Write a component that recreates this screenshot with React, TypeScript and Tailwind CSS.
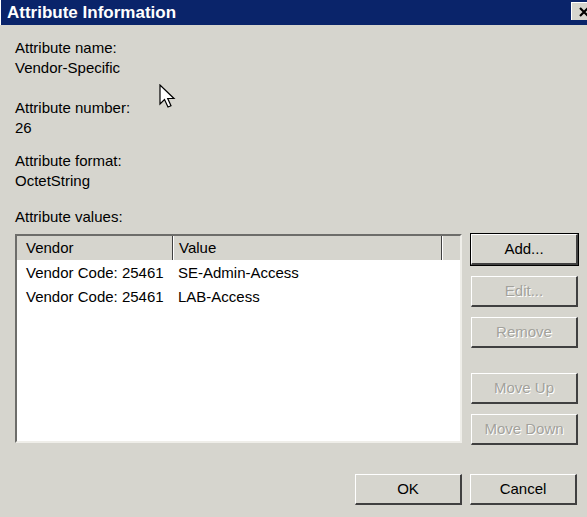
import React from "react";

const font = { fontFamily: '"Liberation Sans", Arial, sans-serif' };

function Btn({ label, disabled, def, className = "" }: { label: string; disabled?: boolean; def?: boolean; className?: string }) {
  return (
    <div
      className={
        "flex h-[31px] w-[107px] items-center justify-center text-[15px] border-t border-l border-t-white border-l-white border-b-2 border-r-2 border-b-[#404040] border-r-[#404040] bg-[#d6d5ce] " +
        (def ? "outline outline-1 outline-black " : "") +
        (disabled ? "text-[#a3a29c] [text-shadow:1px_1px_0_#ffffff] " : "text-black ") +
        className
      }
    >
      {label}
    </div>
  );
}

export default function App() {
  return (
    <div className="relative h-[517px] w-[587px] overflow-hidden bg-[#d6d5ce] text-[15px] text-black" style={font}>
      <div className="flex h-[25px] items-center justify-between border-l border-white bg-[#0a246a] pl-[6px]">
        <span className="text-[17px] font-bold text-white">Attribute Information</span>
        <div className="mr-[-8px] mt-[-3px] flex h-[18px] w-[24px] items-center justify-center border-t border-l border-white bg-[#d6d5ce]">
          <svg width="12" height="10" viewBox="0 0 12 10">
            <path d="M2 1 L10 9 M10 1 L2 9" stroke="#000" strokeWidth="2.2" />
          </svg>
        </div>
      </div>

      <div className="px-[15px] pt-[13px] leading-[20px]">
        <div>Attribute name:</div>
        <div>Vendor-Specific</div>
        <div className="mt-[20px]">Attribute number:</div>
        <div>26</div>
        <div className="mt-[13px]">Attribute format:</div>
        <div>OctetString</div>
        <div className="mt-[16px]">Attribute values:</div>
      </div>

      <div className="mt-[7px] flex gap-[9px] pl-[15px]">
        <div className="h-[209px] w-[447px] border-t-2 border-l-2 border-t-[#6d6d6a] border-l-[#6d6d6a] border-b-2 border-r-2 border-b-[#efeee9] border-r-[#efeee9] bg-white">
          <div className="flex h-[24px] items-stretch bg-[#d6d5ce]">
            <div className="flex w-[156px] items-center border-r border-r-[#404040] pl-[9px]">Vendor</div>
            <div className="flex w-[269px] items-center border-l border-white border-r border-r-[#404040] pl-[5px]">Value</div>
            <div className="flex-1 border-l border-white" />
          </div>
          <div className="leading-[24px]">
            <div className="flex pt-[1px]">
              <span className="w-[161px] pl-[9px]">Vendor Code: 25461</span>
              <span>SE-Admin-Access</span>
            </div>
            <div className="flex">
              <span className="w-[161px] pl-[9px]">Vendor Code: 25461</span>
              <span>LAB-Access</span>
            </div>
          </div>
        </div>

        <div className="flex flex-col">
          <Btn label="Add..." def />
          <Btn label="Edit..." disabled className="mt-[11px]" />
          <Btn label="Remove" disabled className="mt-[10px]" />
          <Btn label="Move Up" disabled className="mt-[25px]" />
          <Btn label="Move Down" disabled className="mt-[10px]" />
        </div>
      </div>

      <div className="mt-[29px] flex justify-end gap-[8px] pr-[10px]">
        <Btn label="OK" />
        <Btn label="Cancel" />
      </div>

      <svg className="absolute left-[159px] top-[84px]" width="20" height="30" viewBox="0 0 20 30">
        <path d="M1 1 L1 20 L5.5 15.5 L9 23 L12 21.8 L8.7 14.5 L15 14.5 Z" fill="#ffffff" stroke="#000000" strokeWidth="1.2" strokeLinejoin="miter" />
      </svg>
    </div>
  );
}
